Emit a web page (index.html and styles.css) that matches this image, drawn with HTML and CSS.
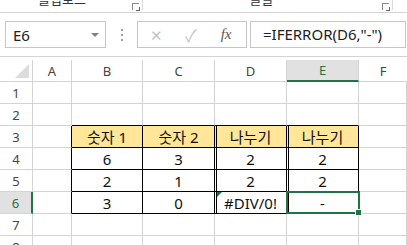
FILE: index.html
```html
<!DOCTYPE html>
<html lang="ko">
  <head>
    <meta charset="UTF-8" />
    <meta name="viewport" content="width=device-width, initial-scale=1.0" />
    <title>IFERROR</title>
    <link rel="stylesheet" href="styles.css">
  </head>
  <body>
    <div class="ribbon">
      <div class="group clip">
        <span class="label">클립보드</span>
        <span class="launcher"></span>
      </div>
      <div class="group font">
        <span class="label">글꼴</span>
        <span class="launcher"></span>
      </div>
    </div>
    <div class="formula-bar">
      <div class="name-box">
        <span>E6</span>
        <span class="drop"></span>
      </div>
      <div class="grip"><i></i><i></i><i></i></div>
      <div class="buttons">
        <span class="btn cancel">✕</span>
        <span class="btn enter">✓</span>
        <span class="btn fx">fx</span>
      </div>
      <div class="formula">=IFERROR(D6,"-")</div>
    </div>
    <div class="sheet">
      <div class="corner"><span></span></div>
      <div class="ch">A</div>
      <div class="ch">B</div>
      <div class="ch">C</div>
      <div class="ch">D</div>
      <div class="ch sel">E</div>
      <div class="ch last">F</div>

      <div class="rh">1</div>
      <div class="c"></div><div class="c"></div><div class="c"></div><div class="c"></div><div class="c"></div><div class="c"></div>

      <div class="rh">2</div>
      <div class="c"></div><div class="c tb"></div><div class="c tb"></div><div class="c tb"></div><div class="c tb"></div><div class="c"></div>

      <div class="rh">3</div>
      <div class="c lb"></div>
      <div class="c t head">숫자 1</div>
      <div class="c t head">숫자 2</div>
      <div class="c t head dl">나누기</div>
      <div class="c t head dl">나누기</div>
      <div class="c"></div>

      <div class="rh">4</div>
      <div class="c lb"></div>
      <div class="c t">6</div>
      <div class="c t">3</div>
      <div class="c t dl">2</div>
      <div class="c t dl">2</div>
      <div class="c"></div>

      <div class="rh">5</div>
      <div class="c lb"></div>
      <div class="c t">2</div>
      <div class="c t">1</div>
      <div class="c t dl">2</div>
      <div class="c t dl">2</div>
      <div class="c"></div>

      <div class="rh sel">6</div>
      <div class="c lb"></div>
      <div class="c t">3</div>
      <div class="c t">0</div>
      <div class="c t dl err">#DIV/0!</div>
      <div class="c t dl active">-</div>
      <div class="c"></div>

      <div class="rh">7</div>
      <div class="c"></div><div class="c"></div><div class="c"></div><div class="c"></div><div class="c"></div><div class="c"></div>

      <div class="rh">8</div>
      <div class="c"></div><div class="c"></div><div class="c"></div><div class="c"></div><div class="c"></div><div class="c"></div>
    </div>
  </body>
</html>
```

FILE: styles.css
```css
body {
  margin: 0;
  background: #fff;
  font-family: "Noto Sans", "Noto Sans CJK KR", sans-serif;
  color: #222;
  overflow: hidden;
  width: 407px;
  height: 245px;
}
.ribbon {
  display: flex;
  height: 12px;
  border-bottom: 1px solid #d4d4d4;
  overflow: hidden;
}
.group {
  display: flex;
  justify-content: center;
  position: relative;
  border-right: 1px solid #dadada;
  height: 10px;
}
.group.clip {
  width: 142px;
}
.group.font {
  width: 249px;
}
.group .label {
  font-size: 13px;
  line-height: 13px;
  margin-top: -7px;
  color: #333;
}
.group.clip .label {
  margin-right: 18px;
}
.group.font .label {
  margin-right: 12px;
}
.launcher {
  position: absolute;
  right: 3px;
  top: 3px;
  width: 6px;
  height: 6px;
  border-left: 1px solid #888;
  border-top: 1px solid #888;
}
.launcher::after {
  content: "";
  position: absolute;
  right: -1px;
  bottom: -1px;
  width: 3px;
  height: 3px;
  border-right: 1px solid #666;
  border-bottom: 1px solid #666;
}
.formula-bar {
  display: flex;
  align-items: center;
  height: 43px;
  border-bottom: 1px solid #d4d4d4;
  padding-left: 5px;
}
.name-box {
  display: flex;
  align-items: center;
  justify-content: space-between;
  box-sizing: border-box;
  width: 101px;
  height: 27px;
  border: 1px solid #c6c6c6;
  padding: 0 6px 0 7px;
  font-size: 15px;
  color: #222;
}
.drop {
  width: 0;
  height: 0;
  border-left: 4px solid transparent;
  border-right: 4px solid transparent;
  border-top: 4px solid #808080;
}
.grip {
  display: flex;
  flex-direction: column;
  gap: 3px;
  width: 31px;
  align-items: center;
}
.grip i {
  width: 2px;
  height: 2px;
  background: #a0a0a0;
}
.buttons {
  display: flex;
  align-items: center;
  box-sizing: border-box;
  width: 110px;
  height: 27px;
  border: 1px solid #c6c6c6;
  margin-right: 3px;
}
.btn {
  color: #c4c4c4;
  font-size: 15px;
}
.btn.cancel {
  margin-left: 12px;
}
.btn.enter {
  margin-left: 22px;
  font-size: 17px;
}
.btn.fx {
  margin-left: 24px;
  font-family: "Liberation Serif", serif;
  font-style: italic;
  color: #555;
  font-size: 15px;
}
.formula {
  box-sizing: border-box;
  width: 156px;
  height: 27px;
  border: 1px solid #c6c6c6;
  padding-left: 12px;
  font-size: 15px;
  line-height: 25px;
  color: #222;
}
.sheet {
  display: grid;
  grid-template-columns: 33px 39px 71px 72px 72px 72px 1fr;
  grid-auto-rows: 22px;
  margin-top: 3px;
}
.sheet > div {
  box-sizing: border-box;
  border-right: 1px solid #d4d4d4;
  border-bottom: 1px solid #d4d4d4;
  display: flex;
  align-items: center;
  justify-content: center;
}
.corner {
  align-items: flex-end !important;
  justify-content: flex-end !important;
  padding: 0 3px 3px 0;
}
.corner span {
  width: 0;
  height: 0;
  border-left: 14px solid transparent;
  border-bottom: 14px solid #dcdcdc;
}
.ch,
.rh {
  font-size: 13px;
  color: #444;
}
.ch.last {
  border-right: none !important;
}
.ch.sel {
  background: #e1e1e1;
  border-bottom: 2px solid #217346 !important;
  color: #217346;
}
.rh.sel {
  background: #e1e1e1;
  border-right: 2px solid #217346 !important;
  color: #217346;
}
.c {
  font-size: 15px;
  color: #111;
  --bg: #fff;
}
.tb {
  border-bottom-color: #000 !important;
}
.lb {
  border-right-color: #000 !important;
}
.t {
  border-right-color: #000 !important;
  border-bottom-color: #000 !important;
}
.head {
  background: #ffe699;
  --bg: #ffe699;
}
.dl {
  box-shadow: inset 1px 0 0 var(--bg), inset 2px 0 0 #000;
}
.err {
  position: relative;
}
.err::before {
  content: "";
  position: absolute;
  left: 2px;
  top: 0;
  border-top: 5px solid #1e7145;
  border-right: 5px solid transparent;
}
.active {
  position: relative;
}
.active::after {
  content: "";
  position: absolute;
  left: -1px;
  top: -1px;
  right: -2px;
  bottom: -1px;
  border: 2px solid #217346;
}
.active::before {
  content: "";
  position: absolute;
  right: -4px;
  bottom: -3px;
  width: 5px;
  height: 5px;
  background: #217346;
  border: 1px solid #fff;
  z-index: 1;
}
```
